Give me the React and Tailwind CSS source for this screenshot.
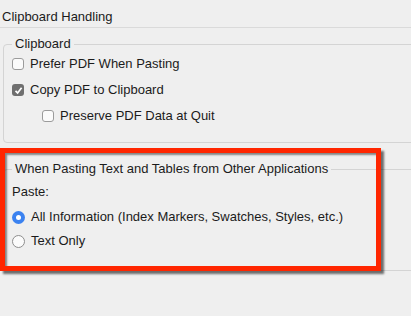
import React from "react";

function Checkbox({ checked }) {
  return checked ? (
    <span className="flex h-[12px] w-[12px] items-center justify-center rounded-[3px] bg-[#6f6f6f]">
      <svg width="9" height="9" viewBox="0 0 9 9">
        <path d="M1.5 4.8 L3.6 6.9 L7.6 1.8" fill="none" stroke="#fff" strokeWidth="1.7" />
      </svg>
    </span>
  ) : (
    <span className="h-[12px] w-[12px] rounded-[3px] border border-[#9b9b9b] bg-[#fbfbfb]" />
  );
}

function Radio({ checked }) {
  return checked ? (
    <span className="flex h-[13px] w-[13px] items-center justify-center rounded-full bg-[#3b82f0]">
      <span className="h-[5px] w-[5px] rounded-full bg-white" />
    </span>
  ) : (
    <span className="h-[13px] w-[13px] rounded-full border border-[#8e8e8e] bg-[#fbfbfb]" />
  );
}

export default function App() {
  return (
    <div className="relative h-[316px] w-[411px] overflow-hidden bg-[#efefef] text-[13px] text-[#1b1b1b] [font-family:'Liberation_Sans',sans-serif]">
      {/* Header */}
      <div className="flex h-[27px] items-center pl-[2px] pt-[7px] leading-[16px]">Clipboard Handling</div>
      <div className="h-px bg-[#dadada]" />

      {/* Clipboard group */}
      <fieldset className="ml-[3px] mt-[8px] w-[430px] rounded-[4px] border border-[#d4d4d4] pb-[16px] pl-[8px]">
        <legend className="-ml-[0px] px-[3px] leading-[16px]">Clipboard</legend>
        <div className="mt-[2px] flex h-[20px] items-center gap-[6px]">
          <Checkbox />
          <span>Prefer PDF When Pasting</span>
        </div>
        <div className="mt-[6px] flex h-[20px] items-center gap-[6px]">
          <Checkbox checked />
          <span>Copy PDF to Clipboard</span>
        </div>
        <div className="mt-[6px] flex h-[20px] items-center gap-[6px] pl-[30px]">
          <Checkbox />
          <span>Preserve PDF Data at Quit</span>
        </div>
      </fieldset>

      {/* Paste group */}
      <fieldset className="ml-[3px] mt-[18px] w-[430px] rounded-[4px] border border-[#d4d4d4] pb-[19px] pl-[8px]">
        <legend className="px-[3px] leading-[16px]">When Pasting Text and Tables from Other Applications</legend>
        <div className="mt-[6px] flex h-[18px] items-center">Paste:</div>
        <div className="mt-[6px] flex h-[20px] items-center gap-[6px]">
          <Radio checked />
          <span>All Information (Index Markers, Swatches, Styles, etc.)</span>
        </div>
        <div className="mt-[4px] flex h-[20px] items-center gap-[6px]">
          <Radio />
          <span>Text Only</span>
        </div>
      </fieldset>

      {/* Annotation highlight */}
      <div className="absolute left-0 top-[148px] h-[123px] w-[381px] border-[5px] border-[#ff2600] shadow-[3px_3px_2px_rgba(0,0,0,0.55),inset_2px_2px_2px_rgba(0,0,0,0.45)]" />
    </div>
  );
}
